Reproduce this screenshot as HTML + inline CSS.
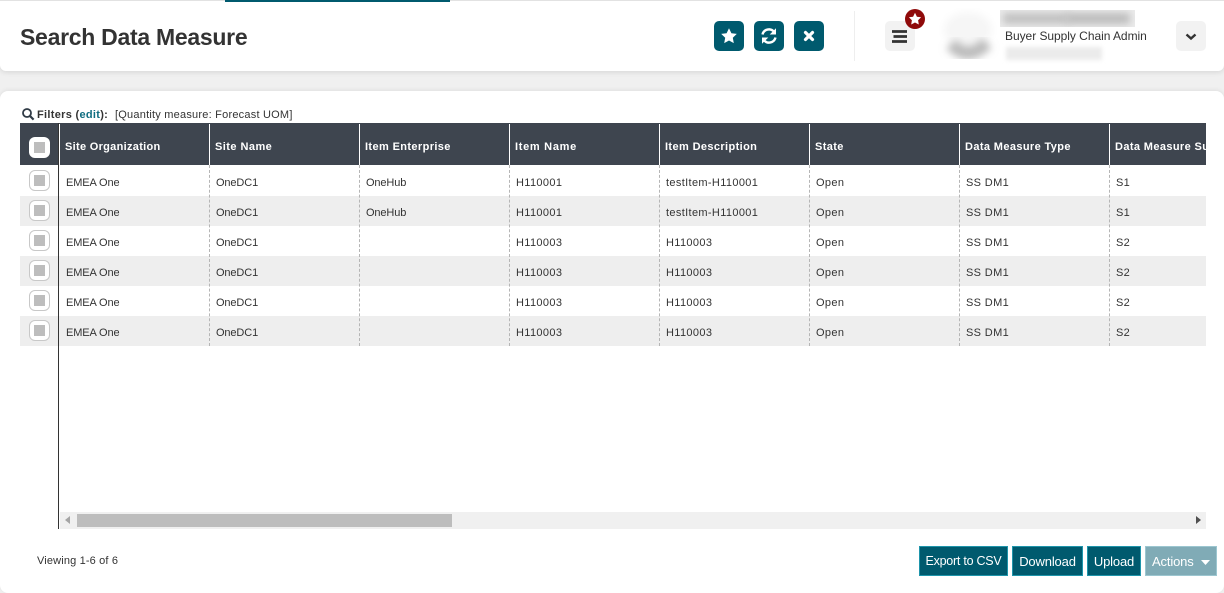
<!DOCTYPE html>
<html><head><meta charset="utf-8"><style>
*{box-sizing:border-box}
html,body{margin:0;padding:0;width:1224px;height:593px;overflow:hidden;background:#f0f0f0;font-family:"Liberation Sans",sans-serif;color:#333}
.a{position:absolute}
#hdr{left:0;top:0;width:1224px;height:71px;background:#fff;border-top:1px solid #e2e2e2;border-radius:0 0 6px 6px;box-shadow:0 1px 6px rgba(0,0,0,.12)}
#tab{left:225px;top:0;width:225px;height:2px;background:#005a6e}
h1{position:absolute;left:20px;top:23px;margin:0;font-size:23px;line-height:28px;font-weight:bold;color:#333;letter-spacing:-.28px;white-space:nowrap}
.ib{position:absolute;top:21px;width:30px;height:30px;border-radius:5px;background:#005a6e}
.gb{position:absolute;top:21px;width:30px;height:30px;border-radius:5px;background:#f2f2f2}
#panel{left:0;top:91px;width:1224px;height:502px;background:#fff;border-radius:8px;box-shadow:0 -1px 5px rgba(0,0,0,.07)}
.t{position:absolute;white-space:nowrap;font-size:11px;line-height:14px;letter-spacing:.23px;color:#333}
.n{letter-spacing:-.12px}
.d{letter-spacing:.35px}
.th{position:absolute;top:123px;height:42px;line-height:49px;padding-left:5px;color:#fff;font-size:11px;font-weight:bold;letter-spacing:.38px;white-space:nowrap;overflow:hidden;width:150px}
.sep{position:absolute;top:124px;width:1px;height:41px;background:#fff}
.dash{position:absolute;top:165px;width:0;height:181px;border-left:1px dashed #b5b5b5}
.row{position:absolute;left:20px;width:1186px;height:30px}
.cb{position:absolute;left:29px;width:21px;height:21px;background:#fff;border:1px solid #c8c8c8;border-radius:6px}
.cb i{position:absolute;left:4px;top:4px;width:11px;height:11px;background:#bdbdbd;display:block}
.btn{position:absolute;top:546px;height:30px;background:#005a6e;border:1px solid #1e95ab;color:#fff;font-size:13px;line-height:29px;text-align:center;white-space:nowrap;letter-spacing:-.15px}
</style></head><body>
<div id="hdr" class="a"></div>
<div id="tab" class="a"></div>
<h1>Search Data Measure</h1>

<div class="ib" style="left:714px"><svg width="30" height="30" viewBox="0 0 30 30"><path fill="#fff" d="M15 7.2l2.4 5 5.4.7-4 3.8 1 5.4-4.8-2.6-4.8 2.6 1-5.4-4-3.8 5.4-.7z"/></svg></div>
<div class="ib" style="left:754px"><svg width="30" height="30" viewBox="0 0 30 30" fill="none" stroke="#fff" stroke-width="2.4"><path d="M8.5 13.5a6.6 6.6 0 0 1 11.6-2.6"/><path d="M21.5 16.5a6.6 6.6 0 0 1-11.6 2.6"/><path fill="#fff" stroke="none" d="M22 7.2v6.3h-6.3zM8 22.8v-6.3h6.3z"/></svg></div>
<div class="ib" style="left:794px"><svg width="30" height="30" viewBox="0 0 30 30" fill="none" stroke="#fff" stroke-width="3.2" stroke-linecap="round"><path d="M11.5 11.5l7 7M18.5 11.5l-7 7"/></svg></div>

<div class="a" style="left:854px;top:11px;width:1px;height:50px;background:#eee"></div>

<div class="gb" style="left:885px"><svg width="30" height="30" viewBox="0 0 30 30"><path fill="none" stroke="#333" stroke-width="2.8" d="M7 10.5h15M8.5 15.5h13.5M7 20.5h15"/></svg></div>
<div class="a" style="left:905px;top:9px;width:20px;height:20px;border-radius:50%;background:#8f0a0a"><svg width="20" height="20" viewBox="0 0 20 20"><path fill="#fff" d="M10 3.8l1.9 3.9 4.2.6-3 3 .7 4.2-3.8-2-3.8 2 .7-4.2-3-3 4.2-.6z"/></svg></div>

<svg class="a" style="left:936px;top:8px" width="68" height="60" viewBox="0 0 68 60"><defs><filter id="b" x="-40%" y="-60%" width="180%" height="220%"><feGaussianBlur stdDeviation="4"/></filter></defs><ellipse cx="32" cy="22" rx="24" ry="18" fill="#f6f6f6" filter="url(#b)"/><path d="M15 36q17 18 36-1" fill="none" stroke="#bcbcbc" stroke-width="13" filter="url(#b)"/></svg>
<div class="a" style="left:1000px;top:10px;width:135px;height:17px;background:#ececec;overflow:hidden"><div class="a" style="left:3px;top:3px;width:66px;height:11px;background:#c0c0c0;filter:blur(4px)"></div><div class="a" style="left:66px;top:3px;width:64px;height:11px;background:#bbb;filter:blur(4px)"></div></div>
<div class="a" style="left:1000px;top:27px;width:150px;height:18px;background:#fff"></div>
<div class="t" style="left:1005px;top:29px;font-size:12px;letter-spacing:-.04px">Buyer Supply Chain Admin</div>
<div class="a" style="left:1006px;top:47px;width:96px;height:13px;background:#ebebeb;filter:blur(2px)"></div>

<div class="gb" style="left:1176px"><svg width="30" height="30" viewBox="0 0 30 30"><path fill="none" stroke="#333" stroke-width="2.4" d="M10.5 13.5l4.5 4 4.5-4"/></svg></div>

<div id="panel" class="a"></div>

<svg class="a" style="left:21px;top:107px" width="14" height="14" viewBox="0 0 14 14" fill="none" stroke="#2f3a45" stroke-width="1.8"><circle cx="6" cy="6" r="4"/><path stroke-width="2.2" d="M9 9l3.6 3.6"/></svg>
<div class="t" style="left:37px;top:108px;font-weight:bold;font-size:11px;letter-spacing:.3px">Filters (<span style="color:#0f6d80">edit</span>):</div>
<div class="t" style="left:115px;top:108px;letter-spacing:.22px">[Quantity measure: Forecast UOM]</div>

<div class="a" style="left:20px;top:123px;width:1186px;height:42px;background:#3e454f;overflow:hidden"></div>
<div class="row" style="top:196px;background:#eee;height:30px"></div>
<div class="row" style="top:256px;background:#eee"></div>
<div class="row" style="top:316px;background:#eee"></div>

<div class="a" style="left:58px;top:123px;width:1px;height:406px;background:#333"></div>
<div class="a" style="left:59px;top:124px;width:1px;height:41px;background:#fff"></div>

<div class="th" style="left:60px;letter-spacing:.3px">Site Organization</div><div class="sep" style="left:209px"></div>
<div class="th" style="left:210px;letter-spacing:.45px">Site Name</div><div class="sep" style="left:359px"></div>
<div class="th" style="left:360px">Item Enterprise</div><div class="sep" style="left:509px"></div>
<div class="th" style="left:510px;letter-spacing:.7px">Item Name</div><div class="sep" style="left:659px"></div>
<div class="th" style="left:660px">Item Description</div><div class="sep" style="left:809px"></div>
<div class="th" style="left:810px">State</div><div class="sep" style="left:959px"></div>
<div class="th" style="left:960px">Data Measure Type</div><div class="sep" style="left:1109px"></div>
<div class="th" style="left:1110px;width:96px">Data Measure Sub</div>

<div class="dash" style="left:209px"></div><div class="dash" style="left:359px"></div><div class="dash" style="left:509px"></div><div class="dash" style="left:659px"></div><div class="dash" style="left:809px"></div><div class="dash" style="left:959px"></div><div class="dash" style="left:1109px"></div>

<div class="cb" style="top:137px;left:29px;width:21px;height:21px;border:0"><i style="left:5px;top:5px"></i></div>
<div class="cb" style="top:170px"><i></i></div>
<div class="cb" style="top:200px"><i></i></div>
<div class="cb" style="top:230px"><i></i></div>
<div class="cb" style="top:260px"><i></i></div>
<div class="cb" style="top:290px"><i></i></div>
<div class="cb" style="top:320px"><i></i></div>

<div class="t n" style="left:66px;top:176px">EMEA One</div><div class="t n" style="left:216px;top:176px">OneDC1</div><div class="t n" style="left:366px;top:176px">OneHub</div><div class="t d" style="left:516px;top:176px">H110001</div><div class="t d" style="left:666px;top:176px">testItem-H110001</div><div class="t d" style="left:816px;top:176px">Open</div><div class="t d" style="left:966px;top:176px">SS DM1</div><div class="t d" style="left:1116px;top:176px">S1</div>
<div class="t n" style="left:66px;top:206px">EMEA One</div><div class="t n" style="left:216px;top:206px">OneDC1</div><div class="t n" style="left:366px;top:206px">OneHub</div><div class="t d" style="left:516px;top:206px">H110001</div><div class="t d" style="left:666px;top:206px">testItem-H110001</div><div class="t d" style="left:816px;top:206px">Open</div><div class="t d" style="left:966px;top:206px">SS DM1</div><div class="t d" style="left:1116px;top:206px">S1</div>
<div class="t n" style="left:66px;top:236px">EMEA One</div><div class="t n" style="left:216px;top:236px">OneDC1</div><div class="t d" style="left:516px;top:236px">H110003</div><div class="t d" style="left:666px;top:236px">H110003</div><div class="t d" style="left:816px;top:236px">Open</div><div class="t d" style="left:966px;top:236px">SS DM1</div><div class="t d" style="left:1116px;top:236px">S2</div>
<div class="t n" style="left:66px;top:266px">EMEA One</div><div class="t n" style="left:216px;top:266px">OneDC1</div><div class="t d" style="left:516px;top:266px">H110003</div><div class="t d" style="left:666px;top:266px">H110003</div><div class="t d" style="left:816px;top:266px">Open</div><div class="t d" style="left:966px;top:266px">SS DM1</div><div class="t d" style="left:1116px;top:266px">S2</div>
<div class="t n" style="left:66px;top:296px">EMEA One</div><div class="t n" style="left:216px;top:296px">OneDC1</div><div class="t d" style="left:516px;top:296px">H110003</div><div class="t d" style="left:666px;top:296px">H110003</div><div class="t d" style="left:816px;top:296px">Open</div><div class="t d" style="left:966px;top:296px">SS DM1</div><div class="t d" style="left:1116px;top:296px">S2</div>
<div class="t n" style="left:66px;top:326px">EMEA One</div><div class="t n" style="left:216px;top:326px">OneDC1</div><div class="t d" style="left:516px;top:326px">H110003</div><div class="t d" style="left:666px;top:326px">H110003</div><div class="t d" style="left:816px;top:326px">Open</div><div class="t d" style="left:966px;top:326px">SS DM1</div><div class="t d" style="left:1116px;top:326px">S2</div>

<div class="a" style="left:60px;top:512px;width:1146px;height:17px;background:#f0f0f0"></div>
<div class="a" style="left:77px;top:514px;width:375px;height:13px;background:#bdbdbd"></div>
<svg class="a" style="left:65px;top:516px" width="6" height="8"><path fill="#a5a5a5" d="M5 0v8L0 4z"/></svg>
<svg class="a" style="left:1195px;top:516px" width="6" height="8"><path fill="#505050" d="M1 0v8l5-4z"/></svg>

<div class="t" style="left:37px;top:554px;letter-spacing:.15px">Viewing 1-6 of 6</div>

<div class="btn" style="left:919px;width:89px;font-size:12.5px;letter-spacing:-.25px">Export to CSV</div>
<div class="btn" style="left:1012px;width:71px">Download</div>
<div class="btn" style="left:1087px;width:54px">Upload</div>
<div class="btn" style="left:1145px;width:72px;background:#80abb6;border-color:#9cc6d0;text-align:left;padding-left:6px">Actions<svg class="a" style="left:55px;top:13px" width="9" height="5"><path fill="#fff" d="M0 0h9L4.5 5z"/></svg></div>
</body></html>
